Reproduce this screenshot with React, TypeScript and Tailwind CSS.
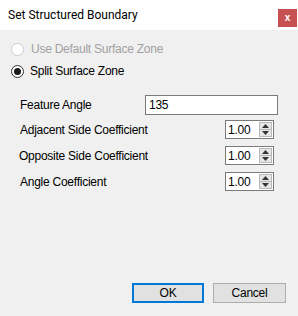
import React from "react";

function Spin({ value }: { value: string }) {
  return (
    <div className="flex h-[19px] w-[49px] items-stretch border border-[#7a7a7a] bg-white">
      <div className="flex flex-1 items-center pl-[2px] text-[12px] leading-none text-black">{value}</div>
      <div className="my-[1px] mr-[1px] flex w-[13px] flex-col border border-[#b9b9b9] bg-[#e6e6e6]">
        <div className="flex flex-1 items-center justify-center">
          <svg width="7" height="4" viewBox="0 0 7 4"><path d="M3.5 0 L7 4 L0 4 Z" fill="#333" /></svg>
        </div>
        <div className="h-px bg-[#b9b9b9]" />
        <div className="flex flex-1 items-center justify-center">
          <svg width="7" height="4" viewBox="0 0 7 4"><path d="M0 0 L7 0 L3.5 4 Z" fill="#333" /></svg>
        </div>
      </div>
    </div>
  );
}

export default function App() {
  return (
    <div
      className="flex h-[316px] w-[298px] flex-col bg-[#f0f0f0] text-[12px] tracking-[-0.25px] text-black"
      style={{ fontFamily: '"Liberation Sans", Arial, sans-serif' }}
    >
      <div className="flex h-[30px] items-start justify-between bg-white">
        <span
          className="ml-[8px] mt-[8px] text-[12px] leading-[14px] tracking-normal text-black"
          style={{ fontFamily: 'Roboto, "Noto Sans", sans-serif' }}
        >
          Set Structured Boundary
        </span>
        <div className="mr-[1px] mt-[9px] flex h-[18px] w-[19px] items-center justify-center bg-[#c75050] text-[10px] font-bold leading-none tracking-normal text-white">
          x
        </div>
      </div>

      <div className="flex flex-1 flex-col">
        <div className="mt-[8px] flex h-[22px] items-center gap-[7px] pl-[11px]">
          <div className="h-[13px] w-[13px] rounded-full border border-[#cccccc] bg-white" />
          <span className="text-[#a0a0a0]">Use Default Surface Zone</span>
        </div>
        <div className="flex h-[22px] items-center gap-[6px] pl-[11px]">
          <div className="flex h-[13px] w-[13px] items-center justify-center rounded-full border border-[#333333] bg-white">
            <div className="h-[7px] w-[7px] rounded-full bg-[#1a1a1a]" />
          </div>
          <span>Split Surface Zone</span>
        </div>

        <div className="mt-[13px] flex h-[20px] items-center pl-[20px]">
          <span className="w-[125px]">Feature Angle</span>
          <div className="flex h-[20px] w-[133px] items-center border border-[#7a7a7a] bg-white pl-[3px]">135</div>
        </div>

        <div className="mt-[5px] flex h-[19px] items-center justify-between pl-[20px] pr-[24px]">
          <span>Adjacent Side Coefficient</span>
          <Spin value="1.00" />
        </div>
        <div className="mt-[7px] flex h-[19px] items-center justify-between pl-[19px] pr-[24px]">
          <span>Opposite Side Coefficient</span>
          <Spin value="1.00" />
        </div>
        <div className="mt-[7px] flex h-[19px] items-center justify-between pl-[20px] pr-[24px]">
          <span>Angle Coefficient</span>
          <Spin value="1.00" />
        </div>

        <div className="mt-auto mb-[13px] flex justify-end gap-[9px] pr-[12px]">
          <button className="flex h-[20px] w-[72px] items-center justify-center border-2 border-[#0078d7] bg-[#e1e1e1] text-[12px]">
            OK
          </button>
          <button className="flex h-[20px] w-[73px] items-center justify-center border border-[#adadad] bg-[#e1e1e1] text-[12px]">
            Cancel
          </button>
        </div>
      </div>
    </div>
  );
}
